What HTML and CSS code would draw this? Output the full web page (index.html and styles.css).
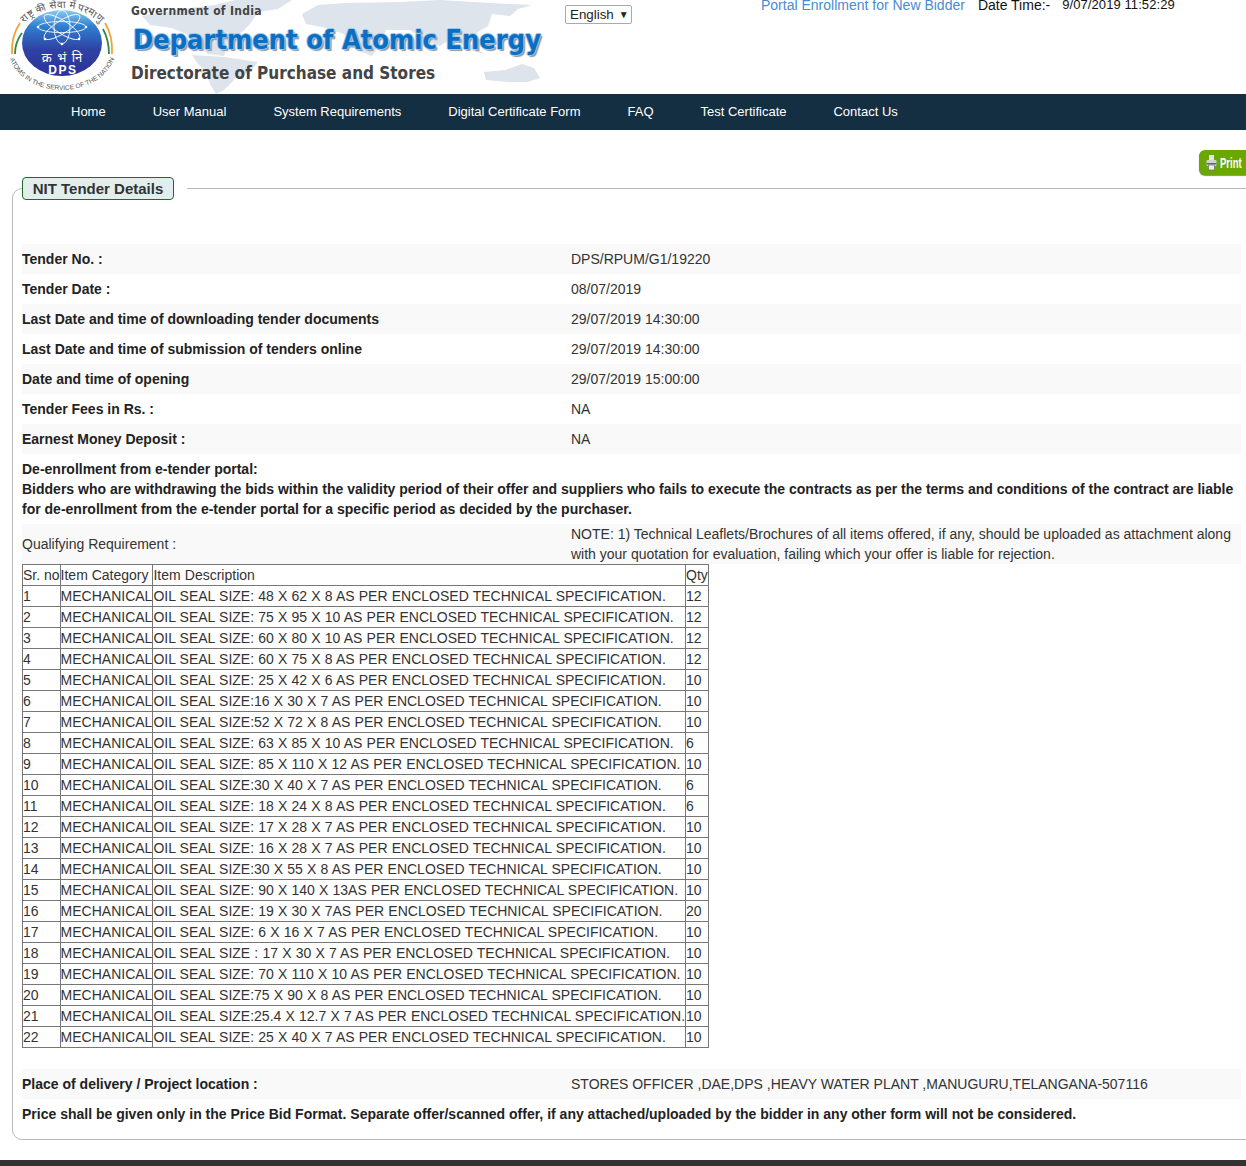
FILE: index.html
```html
<!DOCTYPE html>
<html lang="en">
<head>
    <meta charset="UTF-8">
    <meta name="viewport" content="width=device-width, initial-scale=1.0">
    <title>NIT Tender Details</title>
    <link rel="stylesheet" href="styles.css">
</head>
<body>
<div id="header">
    <!-- world map behind the department title -->
    <svg class="worldMap" width="560" height="94" viewBox="0 0 560 94">
        <path d="M142 16 L165 12 L190 8 L215 5 L235 0 L292 0 L278 9 L258 12 L250 24 L240 34 L228 42 L224 56 L208 54 L196 44 L186 34 L172 28 L150 25Z"/>
        <path d="M192 55 L225 57 L258 62 L250 72 L236 78 L224 90 L216 94 L210 84 L206 72 L198 64Z"/>
        <path d="M302 14 L318 5 L345 3 L400 2 L440 0 L490 3 L532 5 L518 9 L510 16 L492 14 L488 26 L478 32 L470 44 L484 54 L470 50 L452 38 L440 46 L424 40 L410 30 L386 30 L380 44 L372 56 L356 50 L344 34 L326 28 L306 24Z"/>
        <path d="M484 72 L505 70 L522 64 L534 68 L540 78 L528 82 L508 82 L486 80Z"/>
    </svg>
    <svg class="logo" width="125" height="94" viewBox="0 0 125 94">
        <defs>
            <linearGradient id="disc" x1="0" y1="0" x2="0" y2="1">
                <stop offset="0" stop-color="#8ccbf0"/>
                <stop offset="0.25" stop-color="#2f7fd0"/>
                <stop offset="0.6" stop-color="#2f42a4"/>
                <stop offset="1" stop-color="#2c3296"/>
            </linearGradient>
            <path id="arcTop" d="M16 44 A46 36 0 0 1 108 44"/>
            <path id="arcBottom" d="M8 48 A54 42 0 0 0 116 48"/>
        </defs>
        <!-- saffron and green arcs either side of the disc -->
        <path d="M20 23 Q11 36 12 54" fill="none" stroke="#f0a23c" stroke-width="1.8"/>
        <path d="M22 33 Q15 42 15 54" fill="none" stroke="#2f8a3a" stroke-width="1.8"/>
        <path d="M105 23 Q113 36 112 54" fill="none" stroke="#f0a23c" stroke-width="1.8"/>
        <path d="M103 29 Q109 40 109 54" fill="none" stroke="#2f8a3a" stroke-width="1.8"/>
        <ellipse cx="62" cy="43" rx="40" ry="33" fill="url(#disc)"/>
        <g transform="translate(62 27) scale(1 0.7)" fill="none" stroke="#fff" stroke-width="1">
            <ellipse rx="8" ry="24"/>
            <ellipse rx="8" ry="24" transform="rotate(45)"/>
            <ellipse rx="8" ry="24" transform="rotate(90)"/>
            <ellipse rx="8" ry="24" transform="rotate(135)"/>
        </g>
        <g fill="#fff">
            <circle cx="62" cy="44" r="1.3"/>
            <circle cx="79" cy="39" r="1.3"/>
            <circle cx="45" cy="39" r="1.3"/>
            <circle cx="86" cy="27" r="1.3"/>
            <circle cx="38" cy="27" r="1.3"/>
        </g>
        <text class="logoHindi" x="62" y="62" text-anchor="middle">क्र भं नि</text>
        <text class="logoDps" x="63" y="74" text-anchor="middle">DPS</text>
        <text class="logoRing logoRingTop"><textPath href="#arcTop" startOffset="50%" text-anchor="middle">राष्ट्र की सेवा में परमाणु</textPath></text>
        <text class="logoRing"><textPath href="#arcBottom" startOffset="50%" text-anchor="middle">ATOMS IN THE SERVICE OF THE NATION</textPath></text>
    </svg>
    <div id="banner">
        <div class="govt">Government of India</div>
        <div class="dept">Department of Atomic Energy</div>
        <div class="directorate">Directorate of Purchase and Stores</div>
    </div>
    <div id="language"><span>English</span><span class="arrow">▼</span></div>
    <div id="topLinks">
        <a class="enroll">Portal Enrollment for New Bidder</a>
        <span class="dateLabel">Date Time:-</span>
        <span class="dateValue">9/07/2019 11:52:29</span>
    </div>
</div>
<div id="nav">
    <a>Home</a>
    <a>User Manual</a>
    <a>System Requirements</a>
    <a>Digital Certificate Form</a>
    <a>FAQ</a>
    <a>Test Certificate</a>
    <a>Contact Us</a>
</div>
<div id="printBar">
    <div class="printBtn">
        <svg width="11" height="17" viewBox="0 0 11 17">
            <rect x="3" y="1" width="5" height="5" fill="#e4e4e4"/>
            <rect x="0.5" y="6" width="10" height="6" rx="1" fill="#cfd3d3"/>
            <rect x="0.5" y="9" width="10" height="1.4" fill="#5f6a5f"/>
            <rect x="2.5" y="11" width="6" height="5" fill="#eee" stroke="#6d6d6d" stroke-width="0.7"/>
        </svg>
        <span>Print</span>
    </div>
</div>
<fieldset id="details">
    <legend><span>NIT Tender Details</span></legend>
    <div class="row shade"><b>Tender No. :</b><span>DPS/RPUM/G1/19220</span></div>
    <div class="row"><b>Tender Date :</b><span>08/07/2019</span></div>
    <div class="row shade"><b>Last Date and time of downloading tender documents</b><span>29/07/2019 14:30:00</span></div>
    <div class="row"><b>Last Date and time of submission of tenders online</b><span>29/07/2019 14:30:00</span></div>
    <div class="row shade"><b>Date and time of opening</b><span>29/07/2019 15:00:00</span></div>
    <div class="row"><b>Tender Fees in Rs. :</b><span>NA</span></div>
    <div class="row shade"><b>Earnest Money Deposit :</b><span>NA</span></div>
    <div class="row wide"><b>De-enrollment from e-tender portal:<br>Bidders who are withdrawing the bids within the validity period of their offer and suppliers who fails to execute the contracts as per the terms and conditions of the contract are liable for de-enrollment from the e-tender portal for a specific period as decided by the purchaser.</b></div>
    <div class="row shade tall"><span>Qualifying Requirement :</span><span>NOTE: 1) Technical Leaflets/Brochures of all items offered, if any, should be uploaded as attachment along with your quotation for evaluation, failing which your offer is liable for rejection.</span></div>
    <table id="items">
        <tr><td>Sr. no</td><td>Item Category</td><td>Item Description</td><td>Qty</td></tr>
        <tr><td>1</td><td>MECHANICAL</td><td>OIL SEAL SIZE: 48 X 62 X 8 AS PER ENCLOSED TECHNICAL SPECIFICATION.</td><td>12</td></tr>
        <tr><td>2</td><td>MECHANICAL</td><td>OIL SEAL SIZE: 75 X 95 X 10 AS PER ENCLOSED TECHNICAL SPECIFICATION.</td><td>12</td></tr>
        <tr><td>3</td><td>MECHANICAL</td><td>OIL SEAL SIZE: 60 X 80 X 10 AS PER ENCLOSED TECHNICAL SPECIFICATION.</td><td>12</td></tr>
        <tr><td>4</td><td>MECHANICAL</td><td>OIL SEAL SIZE: 60 X 75 X 8 AS PER ENCLOSED TECHNICAL SPECIFICATION.</td><td>12</td></tr>
        <tr><td>5</td><td>MECHANICAL</td><td>OIL SEAL SIZE: 25 X 42 X 6 AS PER ENCLOSED TECHNICAL SPECIFICATION.</td><td>10</td></tr>
        <tr><td>6</td><td>MECHANICAL</td><td>OIL SEAL SIZE:16 X 30 X 7 AS PER ENCLOSED TECHNICAL SPECIFICATION.</td><td>10</td></tr>
        <tr><td>7</td><td>MECHANICAL</td><td>OIL SEAL SIZE:52 X 72 X 8 AS PER ENCLOSED TECHNICAL SPECIFICATION.</td><td>10</td></tr>
        <tr><td>8</td><td>MECHANICAL</td><td>OIL SEAL SIZE: 63 X 85 X 10 AS PER ENCLOSED TECHNICAL SPECIFICATION.</td><td>6</td></tr>
        <tr><td>9</td><td>MECHANICAL</td><td>OIL SEAL SIZE: 85 X 110 X 12 AS PER ENCLOSED TECHNICAL SPECIFICATION.</td><td>10</td></tr>
        <tr><td>10</td><td>MECHANICAL</td><td>OIL SEAL SIZE:30 X 40 X 7 AS PER ENCLOSED TECHNICAL SPECIFICATION.</td><td>6</td></tr>
        <tr><td>11</td><td>MECHANICAL</td><td>OIL SEAL SIZE: 18 X 24 X 8 AS PER ENCLOSED TECHNICAL SPECIFICATION.</td><td>6</td></tr>
        <tr><td>12</td><td>MECHANICAL</td><td>OIL SEAL SIZE: 17 X 28 X 7 AS PER ENCLOSED TECHNICAL SPECIFICATION.</td><td>10</td></tr>
        <tr><td>13</td><td>MECHANICAL</td><td>OIL SEAL SIZE: 16 X 28 X 7 AS PER ENCLOSED TECHNICAL SPECIFICATION.</td><td>10</td></tr>
        <tr><td>14</td><td>MECHANICAL</td><td>OIL SEAL SIZE:30 X 55 X 8 AS PER ENCLOSED TECHNICAL SPECIFICATION.</td><td>10</td></tr>
        <tr><td>15</td><td>MECHANICAL</td><td>OIL SEAL SIZE: 90 X 140 X 13AS PER ENCLOSED TECHNICAL SPECIFICATION.</td><td>10</td></tr>
        <tr><td>16</td><td>MECHANICAL</td><td>OIL SEAL SIZE: 19 X 30 X 7AS PER ENCLOSED TECHNICAL SPECIFICATION.</td><td>20</td></tr>
        <tr><td>17</td><td>MECHANICAL</td><td>OIL SEAL SIZE: 6 X 16 X 7 AS PER ENCLOSED TECHNICAL SPECIFICATION.</td><td>10</td></tr>
        <tr><td>18</td><td>MECHANICAL</td><td>OIL SEAL SIZE : 17 X 30 X 7 AS PER ENCLOSED TECHNICAL SPECIFICATION.</td><td>10</td></tr>
        <tr><td>19</td><td>MECHANICAL</td><td>OIL SEAL SIZE: 70 X 110 X 10 AS PER ENCLOSED TECHNICAL SPECIFICATION.</td><td>10</td></tr>
        <tr><td>20</td><td>MECHANICAL</td><td>OIL SEAL SIZE:75 X 90 X 8 AS PER ENCLOSED TECHNICAL SPECIFICATION.</td><td>10</td></tr>
        <tr><td>21</td><td>MECHANICAL</td><td>OIL SEAL SIZE:25.4 X 12.7 X 7 AS PER ENCLOSED TECHNICAL SPECIFICATION.</td><td>10</td></tr>
        <tr><td>22</td><td>MECHANICAL</td><td>OIL SEAL SIZE: 25 X 40 X 7 AS PER ENCLOSED TECHNICAL SPECIFICATION.</td><td>10</td></tr>
    </table>
    <div class="row shade place"><b>Place of delivery / Project location :</b><span>STORES OFFICER ,DAE,DPS ,HEAVY WATER PLANT ,MANUGURU,TELANGANA-507116</span></div>
    <div class="row wide"><b>Price shall be given only in the Price Bid Format. Separate offer/scanned offer, if any attached/uploaded by the bidder in any other form will not be considered.</b></div>
</fieldset>
<div id="footer"></div>
</body>
</html>
```

FILE: styles.css
```css
html, body {
    overflow-x: hidden;
}

body {
    font-family: "Liberation Sans", Arial, sans-serif;
    font-size: 14px;
    color: #333;
    background-color: #fff;
    margin: 0;
    padding: 0;
}

#header {
    position: relative;
    display: flex;
    height: 94px;
    overflow: hidden;
}

.worldMap {
    position: absolute;
    left: 0;
    top: 0;
    fill: #dee4ec;
}

.logo {
    position: relative;
    flex: none;
}

.logoHindi {
    font-family: "Noto Sans", "Noto Sans CJK SC", sans-serif;
    font-size: 13px;
    word-spacing: 2px;
    fill: #fff;
}

.logoDps {
    font-family: "Liberation Sans", sans-serif;
    font-size: 12px;
    font-weight: bold;
    letter-spacing: 1.6px;
    fill: #fff;
}

.logoRing {
    font-family: "Liberation Sans", sans-serif;
    font-size: 6.6px;
    fill: #555;
}

.logoRingTop {
    font-size: 10px;
}

#banner {
    position: relative;
    width: 434px;
    margin-left: 6px;
    flex: none;
}

.govt, .dept, .directorate {
    font-family: "DejaVu Sans Condensed", "DejaVu Sans", sans-serif;
    font-weight: bold;
    white-space: nowrap;
}

.govt {
    margin-top: 4px;
    font-size: 12px;
    letter-spacing: 0.3px;
    line-height: 15px;
    color: #444;
}

.dept {
    margin: 4px 0 0 2px;
    font-size: 27px;
    line-height: 34px;
    color: #0a6fc4;
    text-shadow: 1px 0 0 #9cc6ea, -1px 0 0 #9cc6ea, 0 1px 0 #9cc6ea, 0 -1px 0 #9cc6ea, 2px 2px 1px #8a97a8;
}

.directorate {
    margin-top: 5px;
    font-size: 17px;
    line-height: 22px;
    color: #444;
}

#language {
    position: relative;
    flex: none;
    display: flex;
    align-items: center;
    gap: 5px;
    width: 67px;
    height: 19px;
    box-sizing: border-box;
    margin-top: 5px;
    padding: 0 0 0 4px;
    border: 1px solid #aaa;
    border-radius: 2px;
    font-size: 13.33px;
    color: #222;
    background-color: #fff;
}

.arrow {
    font-size: 10px;
}

#topLinks {
    position: relative;
    flex: none;
    display: flex;
    margin: -3px 0 0 129px;
    line-height: 16px;
    height: 16px;
    white-space: nowrap;
}

.enroll {
    color: #4a8bd0;
}

.dateLabel {
    margin-left: 13px;
    color: #111;
}

.dateValue {
    margin-left: 12px;
    font-size: 13px;
    letter-spacing: 0.08px;
    color: #111;
}

#nav {
    display: flex;
    gap: 47px;
    height: 36px;
    padding: 0 0 2px 71px;
    box-sizing: border-box;
    align-items: center;
    background-color: #152f42;
    font-size: 13px;
}

#nav a {
    color: #fff;
}

#printBar {
    display: flex;
    justify-content: flex-end;
    height: 47px;
    padding-top: 20px;
    box-sizing: border-box;
    overflow: hidden;
}

.printBtn {
    display: flex;
    align-items: center;
    gap: 3px;
    width: 47px;
    height: 25px;
    padding-left: 7px;
    box-sizing: border-box;
    border-radius: 6px 0 0 6px;
    background-color: #69a800;
    box-shadow: 0 1px 1px #8a8a8a;
    color: #fff;
    font-size: 14px;
    font-weight: bold;
}

.printBtn svg {
    flex: none;
}

.printBtn span {
    display: inline-block;
    transform: scaleX(0.68);
    transform-origin: left center;
}

#details {
    margin: 0 -20px 20px 12px;
    padding: 44px 24px 10px 9px;
    min-width: 0;
    border: 1px solid #bbb;
    border-radius: 10px;
}

#details legend {
    margin: 0 auto 0 0;
    padding: 0 13px 0 0;
}

#details legend span {
    display: block;
    width: 150px;
    height: 21px;
    border: 1px solid #1f6a2a;
    border-radius: 4px;
    background-color: #e2eeee;
    text-align: center;
    font-size: 15px;
    font-weight: bold;
    line-height: 21px;
    color: #333;
}

.row {
    display: grid;
    grid-template-columns: 549px 1fr;
    padding: 5px 0;
    line-height: 20px;
}

.row b {
    color: #222;
}

.shade {
    background-color: #f9f9f9;
}

.wide {
    display: block;
}

.tall {
    padding: 0;
    align-items: center;
}

.place {
    margin-top: 21px;
}

#items {
    border-collapse: collapse;
    border: 1px solid #222;
    font-size: 14px;
    line-height: 20px;
}

#items td {
    padding: 0;
    border: 1px solid #777;
    white-space: nowrap;
}

#items td:nth-child(3) {
    word-spacing: 0.28px;
}

#footer {
    height: 6px;
    background-color: #333;
}
```
